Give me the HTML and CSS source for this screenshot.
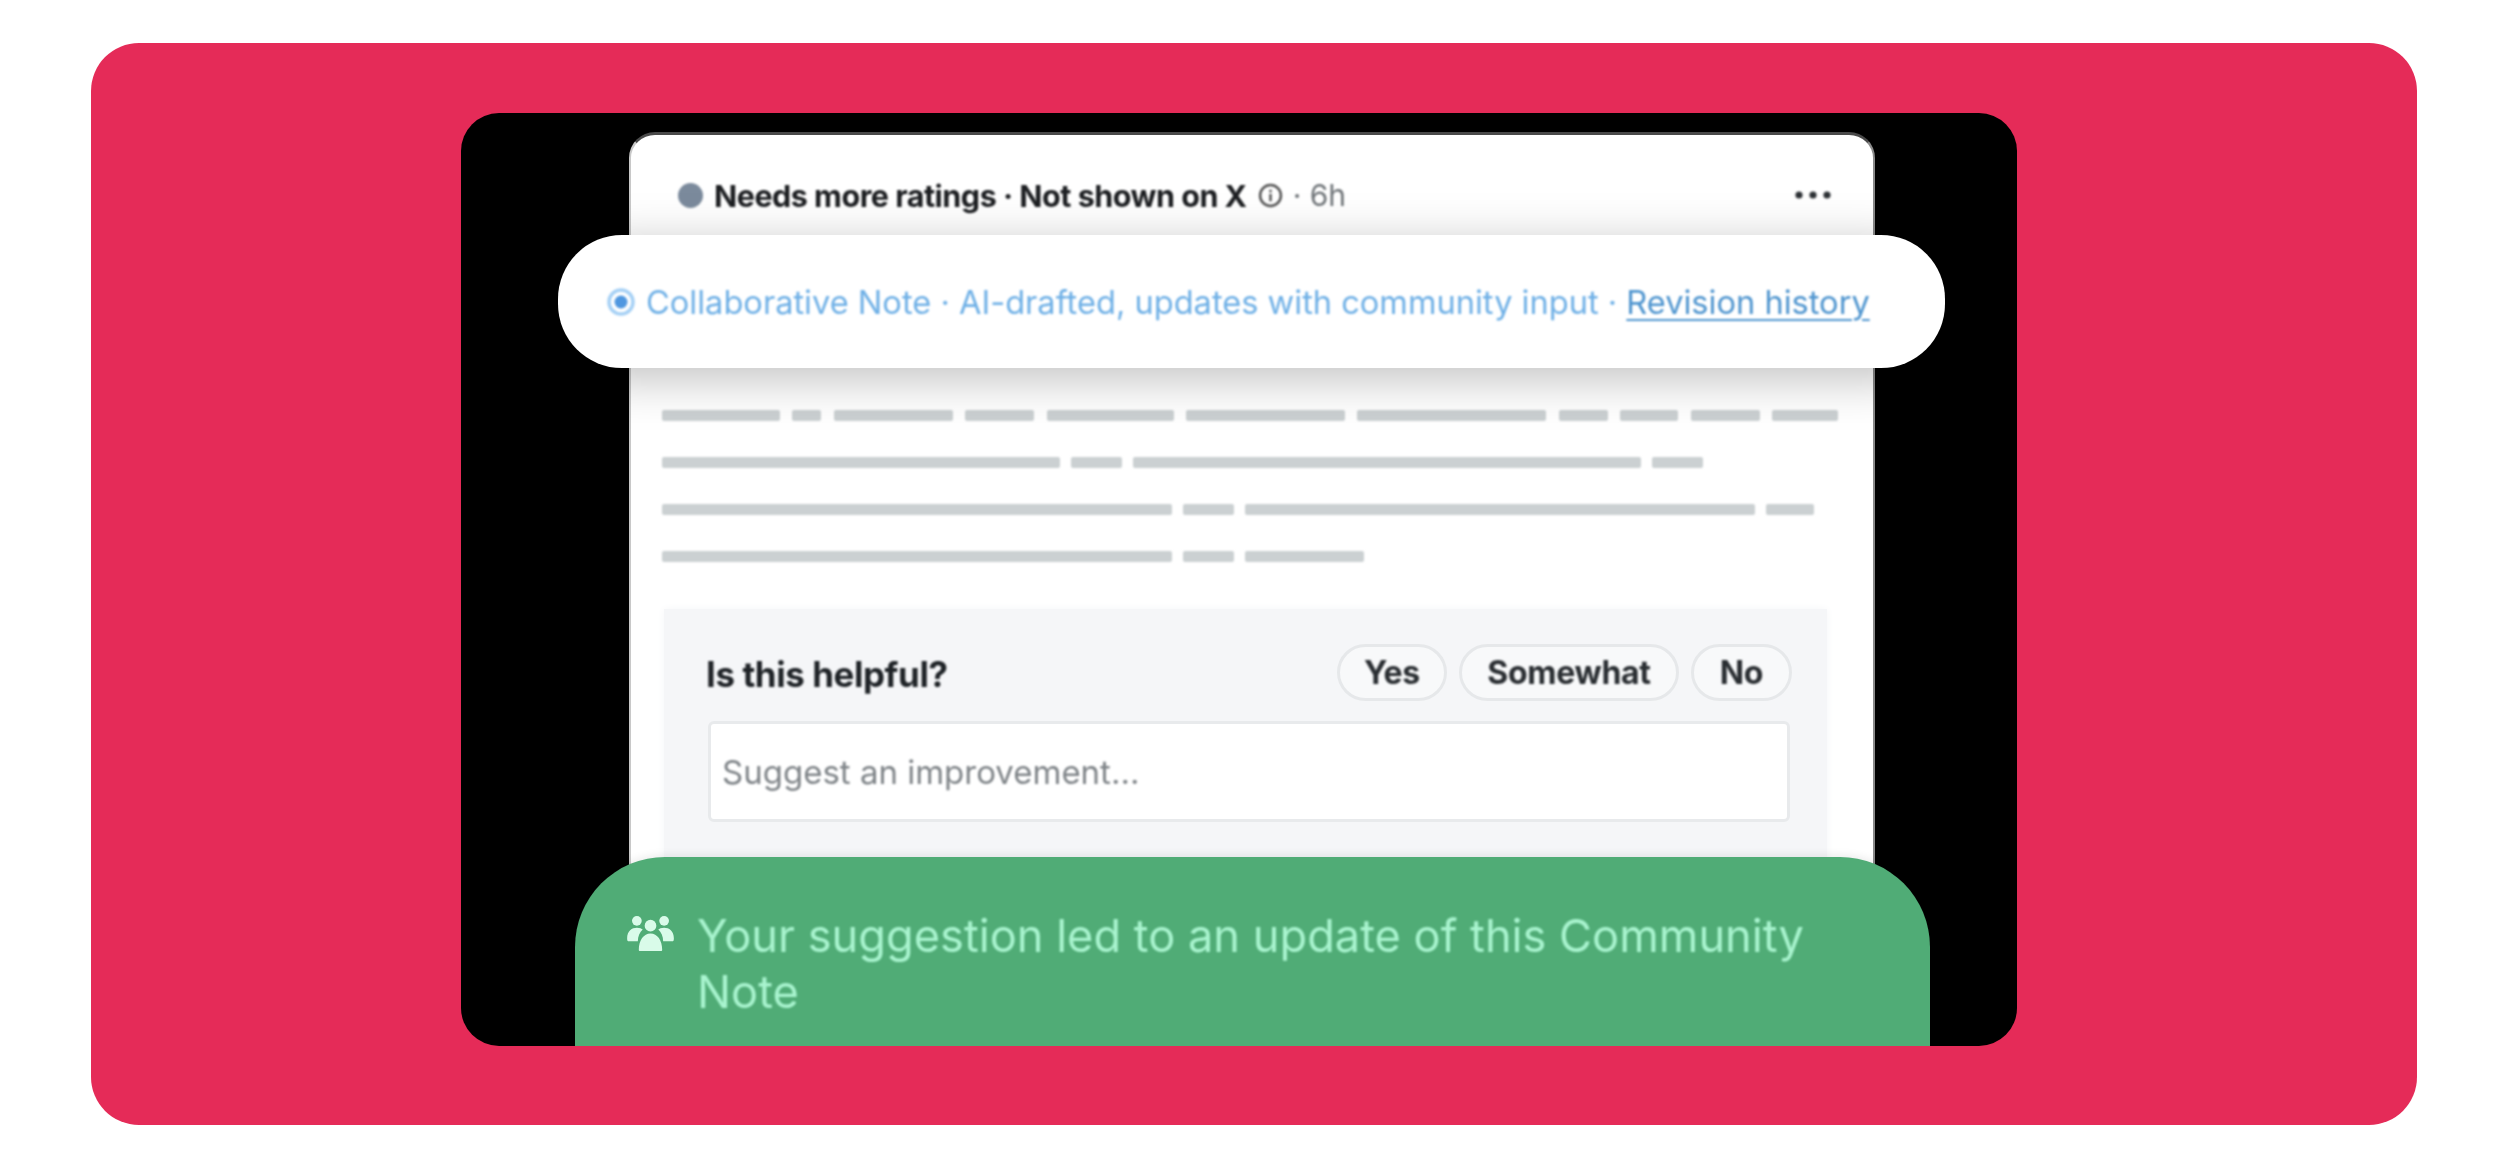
FILE: index.html
```html
<!DOCTYPE html>
<html lang="en">
<head>
<meta charset="utf-8">
<title>Collaborative Notes</title>
<link rel="stylesheet" href="styles.css">
</head>
<body>
<main class="hero">
  <div class="frame">
    <article class="note">
      <header class="note-head">
        <span class="status-dot"></span>
        <strong class="status">Needs more ratings · Not shown on X</strong>
        <svg class="info" viewBox="0 0 24 24" aria-hidden="true"><circle cx="12" cy="12" r="10" fill="none" stroke="#555" stroke-width="2.4"/><rect x="10.8" y="10.5" width="2.4" height="7" fill="#555"/><rect x="10.8" y="6.5" width="2.4" height="2.4" fill="#555"/></svg>
        <span class="time">· 6h</span>
        <svg class="more" viewBox="0 0 36 8" aria-hidden="true"><circle cx="4" cy="4" r="3.6"/><circle cx="18" cy="4" r="3.6"/><circle cx="32" cy="4" r="3.6"/></svg>
      </header>
      <div class="skeleton">
        <div class="sk-row sk-row-first"><i style="width:118px"></i><i style="width:29px"></i><i style="width:119px"></i><i style="width:69px"></i><i style="width:127px"></i><i style="width:159px"></i><i style="width:189px"></i><i style="width:49px"></i><i style="width:58px"></i><i style="width:69px"></i><i style="width:66px"></i></div>
        <div class="sk-row"><i style="width:398px"></i><i style="width:51px"></i><i style="width:508px"></i><i style="width:51px"></i></div>
        <div class="sk-row"><i style="width:510px"></i><i style="width:51px"></i><i style="width:510px"></i><i style="width:48px"></i></div>
        <div class="sk-row"><i style="width:510px"></i><i style="width:51px"></i><i style="width:119px"></i></div>
      </div>
      <section class="rate">
        <div class="rate-top">
          <h2 class="rate-title">Is this helpful?</h2>
          <div class="choices">
            <span class="choice choice-yes"><b>Yes</b></span>
            <span class="choice choice-some"><b>Somewhat</b></span>
            <span class="choice choice-no"><b>No</b></span>
          </div>
        </div>
        <div class="suggest"><span>Suggest an improvement...</span></div>
      </section>
    </article>

    <div class="banner">
      <svg class="banner-icon" viewBox="0 0 28 28" aria-hidden="true"><circle cx="14" cy="14" r="12" fill="none" stroke="#a5d0f5" stroke-width="3.5"/><circle cx="14" cy="14" r="6.5" fill="#4f97e0"/></svg>
      <span class="banner-text">Collaborative Note · AI-drafted, updates with community input · <a class="banner-link" href="#">Revision history</a></span>
    </div>

    <div class="toast">
      <svg class="toast-icon" viewBox="0 0 48 38" aria-hidden="true"><g fill="#d9fbe9"><circle cx="10" cy="6" r="5"/><circle cx="38" cy="6" r="5"/><circle cx="24" cy="11" r="6"/><path d="M0 24c0-8 5-11 10-11 3 0 5 1 6 2-3 3-5 7-5 12H1c-.6 0-1-1-1-3zM48 24c0-8-5-11-10-11-3 0-5 1-6 2 3 3 5 7 5 12h10c.6 0 1-1 1-3zM13 37c-.6 0-1-.5-1-1 0-10 5-17 12-17s12 7 12 17c0 .5-.4 1-1 1z"/></g></svg>
      <p class="toast-text">Your suggestion led to an update of this Community Note</p>
    </div>
  </div>
</main>
</body>
</html>
```

FILE: styles.css
```css
* { box-sizing: border-box; }
html, body { margin: 0; height: 100%; background: #fff; overflow: hidden; }
body { font-family: Inter, "Liberation Sans", sans-serif; }

.hero {
  margin: 43px 83px 0 91px;
  height: 1082px;
  padding: 70px 400px 79px 370px;
  background: #e52b58;
  border-radius: 48px;
}

.frame {
  position: relative;
  height: 933px;
  background: #000;
  border-radius: 38px;
  overflow: hidden;
}

.note {
  margin: 19px 142px 0 168px;
  height: 960px;
  padding: 0 31px;
  background: #fff;
  border-top: 3px solid #4a4a4a;
  border-left: 2px solid #c8c8c8;
  border-right: 2px solid #8a8a8a;
  border-radius: 26px 26px 0 0;
}

.note-head {
  display: flex;
  align-items: center;
  height: 40px;
  margin: 40px 0 0 16px;
  filter: blur(.8px);
}
.status-dot { width: 25px; height: 25px; border-radius: 50%; background: #7b8a9c; margin-right: 11px; flex: none; }
.status { font-size: 30.5px; font-weight: 700; color: #1d1f22; letter-spacing: -.5px; white-space: nowrap; }
.info { width: 25px; height: 25px; margin-left: 11px; flex: none; }
.time { font-size: 30px; color: #6f7478; margin-left: 10px; white-space: nowrap; }
.more { width: 36px; height: 8px; margin-left: auto; margin-right: 11px; fill: #2e3236; }

.skeleton {
  display: flex;
  flex-direction: column;
  gap: 36px;
  margin-top: 195px;
  filter: blur(.9px);
}
.sk-row { display: flex; gap: 11px; height: 11px; }
.sk-row-first { gap: 12.4px; }
.sk-row i { display: block; height: 100%; background: #cbd0d2; border-radius: 2px; }

.rate {
  margin: 47px 15px 0 2px;
  height: 260px;
  padding: 35px 37px 0 44px;
  background: #f5f6f8;
  box-shadow: 0 0 8px #f5f6f8;
}
.rate-top { display: flex; align-items: center; justify-content: space-between; height: 57px; }
.rate-title { margin: 2px 0 0 -2px; font-size: 34.9px; font-weight: 700; color: #1f2327; letter-spacing: -.4px; filter: blur(.8px); }
.choices { display: flex; gap: 12px; margin-right: -2px; }
.choice {
  display: flex;
  align-items: center;
  justify-content: center;
  height: 57px;
  border: 3px solid #e6e8ea;
  border-radius: 29px;
  background: #f8f9fa;
  font-size: 32px;
  color: #2a2e32;
}
.choice b { font-weight: 700; letter-spacing: -.3px; filter: blur(.8px); }
.choice-yes { width: 110px; }
.choice-some { width: 220px; }
.choice-no { width: 101px; }

.suggest {
  display: flex;
  align-items: center;
  height: 101px;
  margin-top: 20px;
  padding-left: 11px;
  background: #fff;
  border: 3px solid #e8eaec;
  border-radius: 6px;
  font-size: 33px;
  color: #7f8488;
}
.suggest span { filter: blur(.8px); }

.banner {
  position: absolute;
  top: 122px;
  left: 97px;
  width: 1387px;
  height: 133px;
  display: flex;
  align-items: center;
  padding-left: 49px;
  background: #fff;
  border-radius: 64px;
  box-shadow: 0 10px 50px rgba(0, 0, 0, .26);
}
.banner-icon { width: 28px; height: 28px; flex: none; filter: blur(.8px); }
.banner-text { margin-left: 11px; font-size: 32.6px; color: #6fb0e6; white-space: nowrap; filter: blur(.8px); }
.banner-link { color: #4f95cf; text-decoration: underline; text-underline-offset: 5px; text-decoration-thickness: 2px; }

.toast {
  position: absolute;
  left: 114px;
  right: 87px;
  bottom: 0;
  height: 189px;
  display: flex;
  align-items: flex-start;
  padding: 51px 0 0 52px;
  background: #50ac76;
  border-radius: 90px 90px 0 0;
  box-shadow: 0 -2px 8px rgba(0, 0, 0, .08);
}
.toast-icon { width: 47px; height: 37px; flex: none; margin-top: 7px; filter: blur(.7px); }
.toast-text {
  margin: 0 0 0 23px;
  width: 1130px;
  font-size: 45.2px;
  line-height: 56px;
  color: #a9f4cf;
  filter: blur(.8px);
}
```
